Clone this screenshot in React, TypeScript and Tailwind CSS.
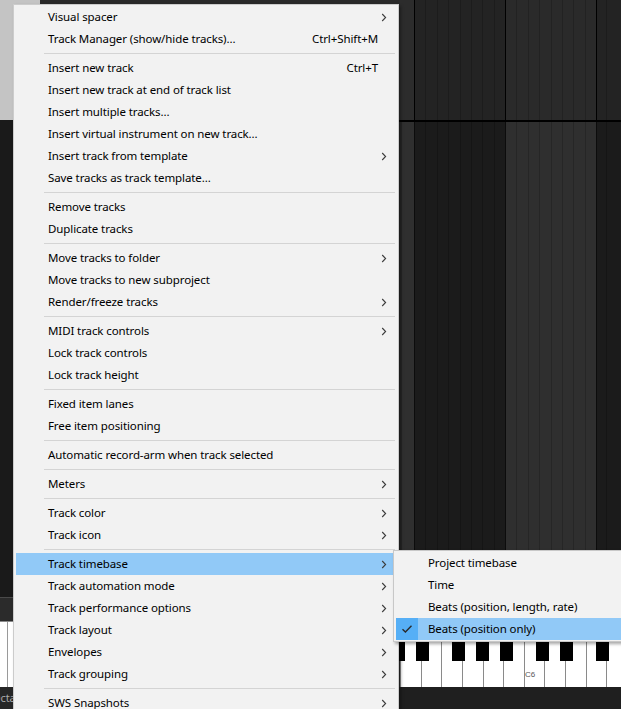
import React from 'react'

type Item =
  | { sep: true }
  | { sep?: false; label: string; shortcut?: string; sub?: boolean; active?: boolean }

const S: Item = { sep: true }

const items: Item[] = [
  { label: 'Visual spacer', sub: true },
  { label: 'Track Manager (show/hide tracks)...', shortcut: 'Ctrl+Shift+M' },
  S,
  { label: 'Insert new track', shortcut: 'Ctrl+T' },
  { label: 'Insert new track at end of track list' },
  { label: 'Insert multiple tracks...' },
  { label: 'Insert virtual instrument on new track...' },
  { label: 'Insert track from template', sub: true },
  { label: 'Save tracks as track template...' },
  S,
  { label: 'Remove tracks' },
  { label: 'Duplicate tracks' },
  S,
  { label: 'Move tracks to folder', sub: true },
  { label: 'Move tracks to new subproject' },
  { label: 'Render/freeze tracks', sub: true },
  S,
  { label: 'MIDI track controls', sub: true },
  { label: 'Lock track controls' },
  { label: 'Lock track height' },
  S,
  { label: 'Fixed item lanes' },
  { label: 'Free item positioning' },
  S,
  { label: 'Automatic record-arm when track selected' },
  S,
  { label: 'Meters', sub: true },
  S,
  { label: 'Track color', sub: true },
  { label: 'Track icon', sub: true },
  S,
  { label: 'Track timebase', sub: true, active: true },
  { label: 'Track automation mode', sub: true },
  { label: 'Track performance options', sub: true },
  { label: 'Track layout', sub: true },
  { label: 'Envelopes', sub: true },
  { label: 'Track grouping', sub: true },
  S,
  { label: 'SWS Snapshots', sub: true },
]

const timebase = [
  { label: 'Project timebase' },
  { label: 'Time' },
  { label: 'Beats (position, length, rate)' },
  { label: 'Beats (position only)', checked: true },
]

function Chevron() {
  return (
    <svg width="6" height="9" viewBox="0 0 6 9" className="block">
      <path d="M1.2 1 L4.6 4.5 L1.2 8" fill="none" stroke="#3c3c3c" strokeWidth="1.1" />
    </svg>
  )
}

function Check() {
  return (
    <svg width="12" height="10" viewBox="0 0 12 10" className="block">
      <path d="M1.5 5.2 L4.4 8 L10.5 1.8" fill="none" stroke="#2a2a2a" strokeWidth="1.4" />
    </svg>
  )
}

// 8 beat stripes inside one measure
function Measure({ bg, line }: { bg: string; line: string }) {
  return (
    <div className={`flex w-[90px] ${bg}`}>
      {Array.from({ length: 8 }).map((_, i) => (
        <div key={i} className={`flex-1 ${i < 7 ? `border-r ${line}` : ''}`} />
      ))}
    </div>
  )
}

function Piano() {
  const whites = [1, 22, 42, 63, 84, 104, 125, 145, 166, 187, 207]
  const blacks = [0, 17, 53, 77, 101, 137, 161, 197]
  return (
    <svg width="222" height="45" viewBox="0 0 222 45" className="block">
      <rect x="0" y="0" width="222" height="45" fill="#ffffff" />
      <rect x="0" y="0" width="1" height="45" fill="#2a2a2a" />
      {whites.map((x) => (
        <rect key={x} x={x} y="0" width="1" height="45" fill="#8a8a8a" />
      ))}
      {blacks.map((x) => (
        <rect key={x} x={x} y="0" width={x === 0 ? 6 : 13} height="19" fill="#000000" />
      ))}
      <text x="131" y="35" fontSize="8" fill="#555" textAnchor="middle" fontFamily="Liberation Sans, sans-serif">
        C6
      </text>
    </svg>
  )
}

export default function App() {
  return (
    <div className="relative h-[709px] w-[621px] overflow-hidden bg-[#1a1a1a] font-['Noto_Sans','Liberation_Sans',sans-serif] text-[11.5px] tracking-[-0.1px] text-black">
      {/* background: track panel + arrange */}
      <div className="flex h-full">
        <div className="flex w-[13px] flex-col">
          <div className="h-[120px] bg-[#c4c4c4]" />
          <div className="h-[477px] bg-[#1a1a1a]" />
          <div className="h-[1px] bg-[#4a4a4a]" />
          <div className="h-[23px] bg-[#2b2b2b]" />
          <div className="h-[1px] bg-[#8a8a8a]" />
          <div className="flex h-[65px] bg-white">
            <div className="w-[8px] border-r border-[#9a9a9a]" />
          </div>
          <div className="flex h-[22px] items-center overflow-hidden bg-[#262626] text-[11px] text-[#a8a8a8]">
            <span className="ml-[-8px] whitespace-nowrap">Octave</span>
          </div>
        </div>
        <div className="flex w-[386px] flex-col">
          <div className="flex h-[120px]">
            <div className="w-[27px] bg-[#c4c4c4]" />
            <div className="flex-1 bg-[#2a2a2a]" />
          </div>
          <div className="flex-1 bg-[#1a1a1a]" />
        </div>
        <div className="flex w-[222px] flex-col">
          <div className="flex h-[120px]">
            <div className="w-[15px] bg-[#2c2c2c]" />
            <div className="w-[1px] bg-black" />
            <Measure bg="bg-[#232323]" line="border-[#1c1c1c]" />
            <div className="w-[1px] bg-black" />
            <Measure bg="bg-[#2a2a2a]" line="border-[#222222]" />
            <div className="w-[1px] bg-black" />
            <div className="flex w-[24px] bg-[#232323]">
              <div className="w-[10px] border-r border-[#1c1c1c]" />
            </div>
          </div>
          <div className="h-[2px] bg-black" />
          <div className="flex h-[520px]">
            <div className="w-[15px] border-l-[3px] border-[#262626] bg-[#2f2f2f]" />
            <div className="w-[1px] bg-[#0c0c0c]" />
            <Measure bg="bg-[#1b1b1b]" line="border-[#151515]" />
            <div className="w-[1px] bg-[#0c0c0c]" />
            <Measure bg="bg-[#2f2f2f]" line="border-[#262626]" />
            <div className="w-[1px] bg-[#0c0c0c]" />
            <div className="flex w-[24px] bg-[#1b1b1b]">
              <div className="w-[10px] border-r border-[#151515]" />
            </div>
          </div>
          <Piano />
          <div className="h-[22px] bg-[#1f1f1f]" />
        </div>
      </div>

      {/* main context menu */}
      <div className="absolute left-[13px] top-[4px] w-[386px] border border-[#cccccc] bg-[#f2f2f2] py-[1px] shadow-[2px_2px_3px_rgba(0,0,0,0.35)]">
        {items.map((it, i) =>
          it.sep ? (
            <div key={i} className="flex h-[7px] items-center pl-[30px] pr-[3px]">
              <div className="h-[1px] flex-1 bg-[#d4d4d4]" />
            </div>
          ) : (
            <div
              key={i}
              className={`mx-[2px] flex h-[22px] items-center pl-[32px] ${it.active ? 'bg-[#91c9f7]' : ''}`}
            >
              <span className="flex-1 whitespace-nowrap">{it.label}</span>
              {it.shortcut && <span className="whitespace-nowrap">{it.shortcut}</span>}
              <span className="flex w-[18px] justify-end pr-[9px]">{it.sub && <Chevron />}</span>
            </div>
          ),
        )}
      </div>

      {/* Track timebase submenu */}
      <div className="absolute left-[393px] top-[550px] w-[240px] border border-[#c8c8c8] bg-[#f2f2f2] py-[1px] shadow-[2px_2px_3px_rgba(0,0,0,0.35)]">
        {timebase.map((it) => (
          <div key={it.label} className={`mx-[2px] flex h-[22px] items-center ${it.checked ? 'bg-[#91c9f7]' : ''}`}>
            <span
              className={`flex h-full w-[22px] items-center justify-center ${it.checked ? 'bg-[#56aff6]' : ''}`}
            >
              {it.checked && <Check />}
            </span>
            <span className="pl-[10px] whitespace-nowrap">{it.label}</span>
          </div>
        ))}
      </div>
    </div>
  )
}
